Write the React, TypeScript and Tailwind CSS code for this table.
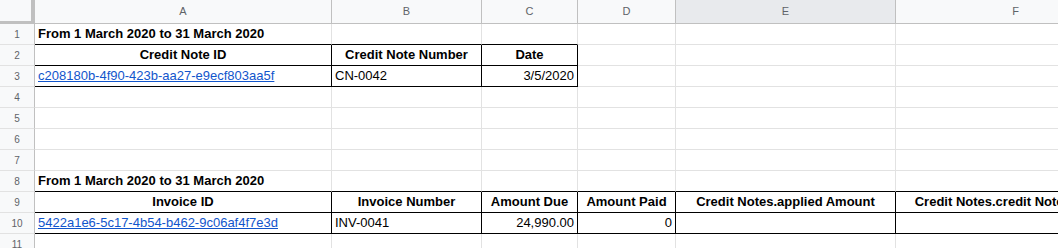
import React from 'react';

// Sheet layout: widths include the 1px right gridline
const COLUMNS = [
  { key: 'A', width: 297 },
  { key: 'B', width: 150 },
  { key: 'C', width: 96 },
  { key: 'D', width: 98 },
  { key: 'E', width: 220 },
  { key: 'F', width: 240 },
];

type Cell = {
  text?: string;
  align?: 'left' | 'center' | 'right';
  bold?: boolean;
  link?: boolean;
  right?: boolean; // black right border
  bottom?: boolean; // black bottom border
};

type Row = Record<string, Cell>;

const title = 'From 1 March 2020 to 31 March 2020';

const ROWS: Row[] = [
  {
    A: { text: title, bold: true, bottom: true },
    B: { bottom: true },
    C: { bottom: true },
  },
  {
    A: { text: 'Credit Note ID', bold: true, align: 'center', right: true, bottom: true },
    B: { text: 'Credit Note Number', bold: true, align: 'center', right: true, bottom: true },
    C: { text: 'Date', bold: true, align: 'center', right: true, bottom: true },
  },
  {
    A: { text: 'c208180b-4f90-423b-aa27-e9ecf803aa5f', link: true, right: true, bottom: true },
    B: { text: 'CN-0042', right: true, bottom: true },
    C: { text: '3/5/2020', align: 'right', right: true, bottom: true },
  },
  {},
  {},
  {},
  {},
  {
    A: { text: title, bold: true, bottom: true },
    B: { bottom: true },
    C: { bottom: true },
    D: { bottom: true },
    E: { bottom: true },
    F: { bottom: true },
  },
  {
    A: { text: 'Invoice ID', bold: true, align: 'center', right: true, bottom: true },
    B: { text: 'Invoice Number', bold: true, align: 'center', right: true, bottom: true },
    C: { text: 'Amount Due', bold: true, align: 'center', right: true, bottom: true },
    D: { text: 'Amount Paid', bold: true, align: 'center', right: true, bottom: true },
    E: { text: 'Credit Notes.applied Amount', bold: true, align: 'center', right: true, bottom: true },
    F: { text: 'Credit Notes.credit Note Number', bold: true, align: 'center', right: true, bottom: true },
  },
  {
    A: { text: '5422a1e6-5c17-4b54-b462-9c06af4f7e3d', link: true, right: true, bottom: true },
    B: { text: 'INV-0041', right: true, bottom: true },
    C: { text: '24,990.00', align: 'right', right: true, bottom: true },
    D: { text: '0', align: 'right', right: true, bottom: true },
    E: { right: true, bottom: true },
    F: { right: true, bottom: true },
  },
  {},
];

const SheetCell = ({ cell, width }: { cell: Cell; width: number }) => {
  const justify =
    cell.align === 'center' ? 'justify-center' : cell.align === 'right' ? 'justify-end' : 'justify-start';
  return (
    <div
      className={`flex shrink-0 items-end h-full border-r border-b px-[3px] pb-[3px] ${justify} ${
        cell.right ? 'border-r-black' : 'border-r-[#e2e2e2]'
      } ${cell.bottom ? 'border-b-black' : 'border-b-[#e2e2e2]'}`}
      style={{ width }}
    >
      {cell.text && (
        <span
          className={`whitespace-nowrap leading-[15px] text-[13px] ${cell.bold ? 'font-bold' : ''} ${
            cell.link ? 'text-[#1155cc] underline' : 'text-black'
          }`}
        >
          {cell.text}
        </span>
      )}
    </div>
  );
};

export default function App() {
  return (
    <main className="w-[1058px] h-[248px] overflow-hidden bg-white font-['Liberation_Sans',Arial,sans-serif]">
      {/* Column headers */}
      <div className="flex h-[24px]">
        <div className="shrink-0 w-[35px] h-full bg-[#f8f9fa] border-r-[4px] border-b-[3px] border-[#c0c0c0]" />
        {COLUMNS.map((col) => (
          <div
            key={col.key}
            className={`shrink-0 flex items-center justify-center h-full border-r border-b border-r-[#c0c0c0] border-b-[#c0c0c0] text-[11px] text-[#5f6368] ${
              col.key === 'E' ? 'bg-[#e8eaed]' : 'bg-[#f8f9fa]'
            }`}
            style={{ width: col.width }}
          >
            {col.key}
          </div>
        ))}
      </div>

      {/* Rows */}
      {ROWS.map((row, index) => (
        <div key={index} className="flex h-[21px]">
          <div className="shrink-0 flex items-center justify-center w-[35px] h-full bg-[#f8f9fa] border-r border-b border-r-[#c0c0c0] border-b-[#e2e2e2] text-[10px] text-[#5f6368]">
            {index + 1}
          </div>
          {COLUMNS.map((col) => (
            <SheetCell key={col.key} cell={row[col.key] ?? {}} width={col.width} />
          ))}
        </div>
      ))}
    </main>
  );
}
